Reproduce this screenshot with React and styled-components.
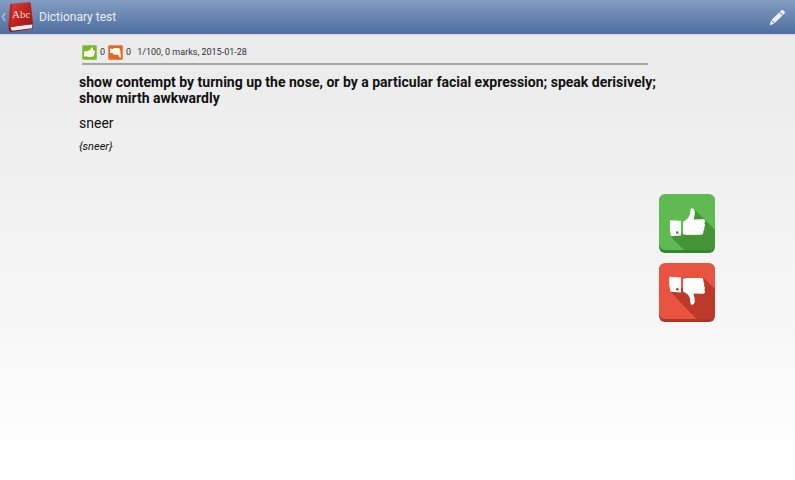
import React from "react"
import styled, { createGlobalStyle } from "styled-components"

const GlobalStyle = createGlobalStyle`
  * {
    box-sizing: border-box;
  }
  body {
    margin: 0;
    font-family: Roboto, "Liberation Sans", sans-serif;
    color: #111;
    background: #fff;
  }
`

const Page = styled.div`
  display: flex;
  flex-direction: column;
  min-height: 100vh;
  background: linear-gradient(#e9e9e9, #f3f3f3 50%, #fff 98%);
`

const ActionBar = styled.header`
  display: flex;
  align-items: center;
  justify-content: space-between;
  height: 34px;
  padding: 0 9px 0 1px;
  background: linear-gradient(#829dc1, #4f6e9f);
  box-shadow: 0 1px #d3dae6;
`

const HomeLink = styled.a`
  display: flex;
  align-items: center;
  gap: 1px;
  color: #e9eff8;
  text-decoration: none;
`

const Title = styled.h1`
  margin: 0 0 0 4px;
  font-size: 12px;
  font-weight: 400;
  line-height: 16px;
`

const IconButton = styled.button`
  display: block;
  padding: 0;
  border: none;
  background: none;
  cursor: pointer;
  svg {
    display: block;
  }
`

const Main = styled.main`
  display: flex;
  flex: 1;
  padding: 0 80px 0 79px;
`

const Card = styled.article`
  flex: 1;
  min-width: 0;
`

const Stats = styled.div`
  display: flex;
  align-items: center;
  gap: 3px;
  margin: 0 11px 0 3px;
  padding: 10px 0 3px;
  border-bottom: 2px solid #a5a5a5;
  font-size: 9px;
  line-height: 16px;
  color: #333;
  svg {
    display: block;
  }
`

const Summary = styled.span`
  margin-left: 3px;
`

const Question = styled.h2`
  margin: 9px 0;
  font-size: 14px;
  font-weight: 700;
  line-height: 16px;
`

const Answer = styled.p`
  margin: 0 0 9px;
  font-size: 14px;
  line-height: 16px;
`

const Example = styled.p`
  margin: 0;
  font-size: 11px;
  font-style: italic;
  line-height: 14px;
`

const Votes = styled.div`
  display: flex;
  flex-direction: column;
  justify-content: center;
  gap: 10px;
  padding-top: 2px;
`

const Chevron = () => (
  <svg width="5" height="10" viewBox="0 0 5 10" fill="none">
    <path d="M4 1 1.5 5 4 9" stroke="#b9cbe4" strokeWidth="1.3" />
  </svg>
)

const Book = () => (
  <svg width="27" height="30" viewBox="0 0 27 30">
    <defs>
      <linearGradient id="cover" x1="0" y1="0" x2="1" y2="1">
        <stop offset="0" stopColor="#d9453f" />
        <stop offset="0.5" stopColor="#c02220" />
        <stop offset="1" stopColor="#931310" />
      </linearGradient>
    </defs>
    <path d="M2 24 25 22.5 25.8 26.8 4 30Q1.5 29.5 2 24Z" fill="#7d1512" />
    <path d="M3.6 25 25 22.3V26.2L5 28.8Q3.4 27.5 3.6 25Z" fill="#eeeae6" />
    <path
      d="M4 1.8 22.5 0.2Q23.6 0.2 23.8 1.2L26 22.3Q14 22.8 3.5 25.2 2 25.5 1.8 28L1.2 24 2.8 3Q3 1.9 4 1.8Z"
      fill="url(#cover)"
    />
    <path d="M4.6 2.4 2.8 24.6" stroke="#8e1714" strokeWidth="0.8" />
    <text
      x="5"
      y="16"
      fill="#f9dfda"
      fontFamily="'Liberation Serif', serif"
      fontSize="11"
    >
      Abc
    </text>
  </svg>
)

const Pencil = () => (
  <svg width="17" height="17" viewBox="0 0 17 17" fill="#f4f6f9">
    <path d="M.6 16.2 2.1 11.6 5.2 14.7Z" />
    <path d="M2.6 11 10.2 3.5 13.3 6.6 5.7 14.1Z" />
    <path d="M10.9 2.8 12.4 1.3Q13.3.5 14.2 1.3L15.6 2.7Q16.3 3.6 15.5 4.5L14 5.9Z" />
    <path d="M4.3 12.4 11.6 5.2" stroke="#c3cfdf" strokeWidth="0.6" />
  </svg>
)

const SmallThumb = ({ down }) => (
  <svg width="15" height="15" viewBox="0 0 15 15">
    <rect width="15" height="15" rx="2" fill={down ? "#e4662b" : "#78b82f"} />
    <rect
      x="0.5"
      y="0.5"
      width="14"
      height="14"
      rx="2"
      fill="none"
      stroke={down ? "#ee8a50" : "#94cc4e"}
    />
    {down ? (
      <path
        d="M2 3.6 4.6 4 6 3 10.6 3Q12 3.4 12.2 5L12.6 8.4Q13.4 11 12.8 12.4 11.6 12.8 10.8 11.2L9.6 9.4 6 9.8Q4.6 9.4 5 8.2L2 7.8Z"
        fill="#fffbe9"
      />
    ) : (
      <path
        d="M2 6.6 4.6 6.2 8 5 9.4 2.8Q10.4 1.6 11.2 2.8L10.8 5.2 12.4 5.5Q13.3 6.2 12.8 7.2 13 8.2 12.4 8.8 12.5 9.8 11.8 10.4 11.6 11.6 10.4 11.8L6 12 4.6 11.2 2 11.8Z"
        fill="#fffbe9"
      />
    )}
  </svg>
)

const ThumbUp = () => (
  <svg width="56" height="59" viewBox="0 0 56 59">
    <rect y="1" width="56" height="58" rx="6" fill="#36852f" />
    <rect width="56" height="56" rx="6" fill="#5fba52" />
    <path d="M34.5 14.5 56 36V50Q56 56 50 56H25L11 42 30 38Z" fill="#439536" />
    <path d="M11 26.2 22 26.7V41.6L12 42.2Q10.5 37 11 26.2Z" fill="#fff" />
    <circle cx="18.3" cy="38.6" r="1.3" fill="#3d8833" />
    <path
      d="M24 27.8Q29 25.5 31 20.5L31.6 15.5Q32.2 13.8 34 14.5 36.4 16 35.7 20.5L34.7 25.4 44.5 25.3Q46.6 26 45.8 28.6L45.2 29.6Q46.8 31 45.2 33.6 46 35.5 44.4 36.9 44.8 40.5 42 40.8L27.5 41 24 40.2Z"
      fill="#fff"
    />
  </svg>
)

const ThumbDown = () => (
  <svg width="56" height="59" viewBox="0 0 56 59">
    <rect y="1" width="56" height="58" rx="6" fill="#b03426" />
    <rect width="56" height="56" rx="6" fill="#e8543f" />
    <path d="M45 15 56 26V50Q56 56 50 56H37.5L11.5 29 26 24Z" fill="#bd3a28" />
    <path d="M10.2 13.8 22 14.4V29.4L11.6 28.8Q9.6 22 10.2 13.8Z" fill="#fff" />
    <circle cx="18.3" cy="26.3" r="1.3" fill="#b5372a" />
    <path
      d="M24 15.9 27.5 15 42.5 15.1Q45 15.6 44.4 19 46 20.8 45 22.6 46.7 25 45.3 26.6 47.2 30.5 44.2 30.8L34.5 30.6 35.7 36Q36.2 40.5 34 41.6 32 42.2 31.5 40.2L31 35.5Q29.3 30.5 24 28.6Z"
      fill="#fff"
    />
  </svg>
)

const App = () => (
  <Page>
    <GlobalStyle />
    <ActionBar>
      <HomeLink href="#home">
        <Chevron />
        <Book />
        <Title>Dictionary test</Title>
      </HomeLink>
      <IconButton type="button" aria-label="Edit card">
        <Pencil />
      </IconButton>
    </ActionBar>
    <Main>
      <Card>
        <Stats>
          <SmallThumb />
          <span>0</span>
          <SmallThumb down />
          <span>0</span>
          <Summary>1/100, 0 marks, 2015-01-28</Summary>
        </Stats>
        <Question>
          show contempt by turning up the nose, or by a particular facial
          expression; speak derisively; show mirth awkwardly
        </Question>
        <Answer>sneer</Answer>
        <Example>{"{sneer}"}</Example>
      </Card>
      <Votes>
        <IconButton type="button" aria-label="I know this word">
          <ThumbUp />
        </IconButton>
        <IconButton type="button" aria-label="I don't know this word">
          <ThumbDown />
        </IconButton>
      </Votes>
    </Main>
  </Page>
)

export default App
